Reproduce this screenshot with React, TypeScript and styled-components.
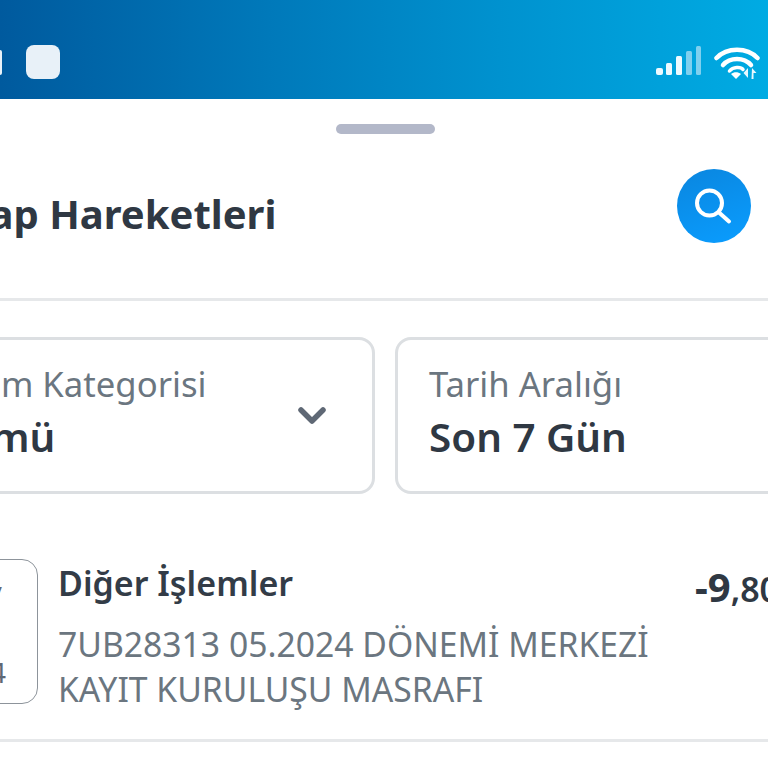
import styled, { createGlobalStyle } from 'styled-components';

const GlobalStyle = createGlobalStyle`
  html, body {
    margin: 0;
    padding: 0;
    background: #fff;
  }
  body {
    font-family: 'Noto Sans', 'Open Sans', sans-serif;
  }
`;

export default function App() {
  return (
    <Screen>
      <GlobalStyle />
      <StatusBar>
        <AppIcons>
          <AppIcon $short />
          <AppIcon />
        </AppIcons>
        <StatusIcons>
          <svg width="46" height="30" viewBox="0 0 46 30">
            <rect x="0" y="22" width="7" height="7" rx="2" fill="#eefaff" />
            <rect x="10" y="17" width="6" height="12" rx="1.5" fill="#eefaff" />
            <rect x="20" y="10" width="6" height="19" rx="1.5" fill="#eefaff" />
            <rect x="30" y="5" width="6" height="24" rx="1.5" fill="#7fd0ef" />
            <rect x="40" y="0" width="5" height="29" rx="1.5" fill="#7fd0ef" />
          </svg>
          <svg width="46" height="34" viewBox="0 0 46 34">
            <path d="M2.500 12 C13 1 33 1 43.500 12" fill="none" stroke="#fff" strokeWidth="4.500" strokeLinecap="round" />
            <path d="M9 19 C16 11 30 11 37 19" fill="none" stroke="#fff" strokeWidth="4.500" strokeLinecap="round" />
            <path d="M15.500 25 C19 20.500 27 20.500 29 23.500" fill="none" stroke="#fff" strokeWidth="3.500" strokeLinecap="round" />
            <path d="M17 28 L22 33 L27 28 C24 25.500 20 25.500 17 28 Z" fill="#fff" />
            <path d="M34 22 V32 L29.500 27 Z" fill="#e8f8fe" />
            <path d="M38 22 L42.500 27 H39.500 V33 H37.500 Z" fill="#e8f8fe" />
          </svg>
        </StatusIcons>
      </StatusBar>
      <Sheet>
        <Handle />
        <TitleRow>
          <Title>Hesap Hareketleri</Title>
          <SearchButton aria-label="Ara">
            <svg width="40" height="40" viewBox="0 0 40 40">
              <circle cx="15.500" cy="17" r="12.500" fill="none" stroke="#fff" strokeWidth="4" />
              <path d="M25 26.500 L35 35.500" fill="none" stroke="#fff" strokeWidth="4" strokeLinecap="round" />
            </svg>
          </SearchButton>
        </TitleRow>
        <Divider />
        <Filters>
          <FilterCard>
            <FilterText>
              <FilterLabel>İşlem Kategorisi</FilterLabel>
              <FilterValue>Tümü</FilterValue>
            </FilterText>
            <Chevron width="28" height="18" viewBox="0 0 28 18">
              <path d="M3 3 L14 14 L25 3" fill="none" stroke="#5f6875" strokeWidth="5.500" strokeLinecap="round" strokeLinejoin="round" />
            </Chevron>
          </FilterCard>
          <FilterCard>
            <FilterText>
              <FilterLabel>Tarih Aralığı</FilterLabel>
              <FilterValue>Son 7 Gün</FilterValue>
            </FilterText>
          </FilterCard>
        </Filters>
        <Transaction>
          <DateBox>
            <DateMonth>May</DateMonth>
            <DateDay>31</DateDay>
            <DateYear>2024</DateYear>
          </DateBox>
          <Details>
            <Category>Diğer İşlemler</Category>
            <Description>7UB28313 05.2024 DÖNEMİ MERKEZİ KAYIT KURULUŞU MASRAFI</Description>
          </Details>
          <Amount>
            -9<AmountCents>,80 TL</AmountCents>
          </Amount>
        </Transaction>
        <RowDivider />
      </Sheet>
    </Screen>
  );
}

const Screen = styled.div`
  width: 768px;
  height: 768px;
  overflow: hidden;
  background: #fff;
`;
const StatusBar = styled.div`
  height: 99px;
  box-sizing: border-box;
  padding: 45px 8px 0 0;
  display: flex;
  justify-content: space-between;
  align-items: flex-start;
  background: linear-gradient(90deg, #005a9e 0%, #0079ba 35%, #0092cf 65%, #00abe3 100%);
`;
const AppIcons = styled.div`
  display: flex;
  align-items: center;
  gap: 24px;
  margin-left: -32px;
`;
const AppIcon = styled.div<{ $short?: boolean }>`
  width: 34px;
  height: ${props => (props.$short ? '25px' : '34px')};
  border-radius: ${props => (props.$short ? '2px' : '8px')};
  background: #e8f1f8;
`;
const StatusIcons = styled.div`
  display: flex;
  align-items: flex-start;
  gap: 12px;
  margin-top: 1px;
`;
const Sheet = styled.div`
  display: flex;
  flex-direction: column;
`;
const Handle = styled.div`
  width: 99px;
  height: 10px;
  margin: 25px 0 0 336px;
  border-radius: 5px;
  background: #b3b8c9;
`;
const TitleRow = styled.div`
  height: 164px;
  box-sizing: border-box;
  display: flex;
  justify-content: space-between;
  align-items: flex-start;
  margin-left: -85px;
  padding: 35px 17px 0 0;
`;
const Title = styled.h1`
  margin: 20px 0 0;
  font-size: 40px;
  line-height: 50px;
  font-weight: 700;
  color: #2f3843;
`;
const SearchButton = styled.button`
  width: 74px;
  height: 74px;
  padding: 0;
  border: 0;
  border-radius: 50%;
  display: flex;
  align-items: center;
  justify-content: center;
  background: linear-gradient(160deg, #0a86df, #0a9dff);
`;
const Divider = styled.div`
  height: 3px;
  background: #e6e8ea;
`;
const Filters = styled.div`
  display: flex;
  gap: 20px;
  margin: 36px 0 0 -90px;
`;
const FilterCard = styled.div`
  flex: 0 0 465px;
  height: 157px;
  box-sizing: border-box;
  padding: 0 46px 5px 31px;
  display: flex;
  align-items: center;
  justify-content: space-between;
  border: 3px solid #dcdfe2;
  border-radius: 16px;
  background: #fff;
`;
const FilterText = styled.div`
  display: flex;
  flex-direction: column;
`;
const FilterLabel = styled.span`
  font-size: 34.700px;
  line-height: 46px;
  color: #6b7680;
`;
const FilterValue = styled.span`
  margin-top: 2px;
  font-size: 40.400px;
  line-height: 56px;
  font-weight: 600;
  color: #2f3843;
`;
const Chevron = styled.svg`
  margin-top: 6px;
`;
const Transaction = styled.div`
  display: flex;
  align-items: flex-start;
  margin: 65px 0 0 -90px;
`;
const DateBox = styled.div`
  flex: 0 0 128px;
  height: 145px;
  box-sizing: border-box;
  display: flex;
  flex-direction: column;
  align-items: center;
  justify-content: space-between;
  padding: 12px 0 14px;
  border: 1px solid #8d949b;
  border-radius: 16px;
`;
const DateMonth = styled.span`
  font-size: 28px;
  line-height: 38px;
  color: #5f6875;
`;
const DateDay = styled.span`
  font-size: 34px;
  line-height: 44px;
  font-weight: 700;
  color: #2f3843;
`;
const DateYear = styled.span`
  font-size: 28px;
  line-height: 36px;
  color: #5f6875;
`;
const Details = styled.div`
  flex: 0 0 606px;
  margin-left: 20px;
`;
const Category = styled.div`
  font-size: 34px;
  line-height: 48px;
  font-weight: 600;
  color: #333c47;
`;
const Description = styled.div`
  margin-top: 15px;
  font-size: 33.700px;
  line-height: 45px;
  color: #6b7680;
`;
const Amount = styled.div`
  margin-left: 31px;
  font-size: 40px;
  line-height: 56px;
  font-weight: 700;
  white-space: nowrap;
  color: #2f3843;
`;
const AmountCents = styled.span`
  font-size: 34px;
  font-weight: 600;
`;
const RowDivider = styled.div`
  height: 3px;
  margin-top: 27px;
  background: #e6e8ea;
`;
